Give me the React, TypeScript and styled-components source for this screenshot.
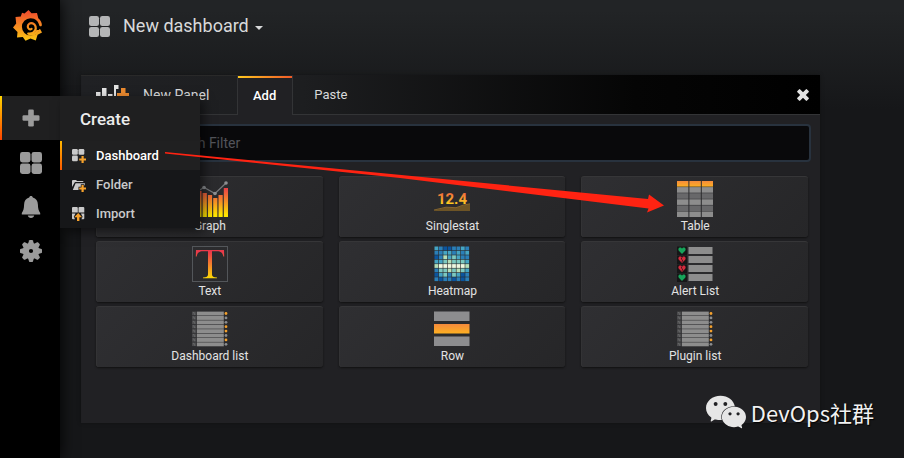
import React from "react";
import styled, { createGlobalStyle, css } from "styled-components";
import { SiWechat } from "react-icons/si";

const GlobalStyle = createGlobalStyle`
  * { box-sizing: border-box; }
  body {
    margin: 0;
    background: #161719;
    color: #d8d9da;
    font-family: Roboto, "Noto Sans", sans-serif;
    font-size: 13px;
    line-height: 16px;
  }
  button, input { font: inherit; color: inherit; }
  a { color: inherit; text-decoration: none; }
  svg { display: block; flex: none; }
`;

const Page = styled.div`
  position: relative;
  display: flex;
  min-height: 100vh;
  background: linear-gradient(180deg, #222426 10px, #161719 110px);
`;

const Sidebar = styled.nav`
  position: relative;
  z-index: 2;
  flex: none;
  display: flex;
  flex-direction: column;
  width: 60px;
  background: #000;
  box-shadow: 0 0 15px #000;
`;

const LogoLink = styled.a`
  display: flex;
  justify-content: center;
  height: 96px;
  padding-top: 10px;
  padding-right: 4px;
`;

const SideList = styled.ul`
  list-style: none;
  margin: 0;
  padding: 0;
`;

const SideItem = styled.li<{ $open?: boolean }>`
  position: relative;
  ${(p) =>
    p.$open &&
    css`
      margin-bottom: 1px;
      background: #1f1f20;
      &::before {
        content: "";
        position: absolute;
        inset: 0 auto 0 0;
        width: 2px;
        background: linear-gradient(180deg, #ffd500, #ff4400);
      }
    `}
`;

const SideLink = styled.a`
  display: flex;
  align-items: center;
  justify-content: center;
  height: 44px;
  padding-left: 2px;
  color: #9b9b9b;
`;

const Flyout = styled.div`
  position: absolute;
  top: 0;
  left: 100%;
  width: 140px;
  background: #161719;
  box-shadow: 4px 4px 10px rgba(0, 0, 0, 0.5);
`;

const FlyoutTitle = styled.a`
  display: flex;
  align-items: center;
  height: 45px;
  padding-left: 20px;
  background: #1f1f20;
  color: #ececec;
  font-size: 17px;
  font-weight: 500;
`;

const FlyoutLink = styled.a<{ $active?: boolean }>`
  position: relative;
  display: flex;
  align-items: center;
  gap: 10px;
  height: 29px;
  padding-left: 12px;
  font-weight: 500;
  color: ${(p) => (p.$active ? "#ffffff" : "#c9cacb")};
  background: ${(p) => (p.$active ? "#202021" : "transparent")};
  ${(p) =>
    p.$active &&
    css`
      &::before {
        content: "";
        position: absolute;
        inset: 0 auto 0 0;
        width: 2px;
        background: linear-gradient(180deg, #ffb800, #ff5a00);
      }
    `}
`;

const Main = styled.main`
  flex: 1;
  min-width: 0;
  display: flex;
  flex-direction: column;
`;

const Navbar = styled.header`
  display: flex;
  align-items: center;
  height: 52px;
  padding-left: 29px;
`;

const TitleButton = styled.button`
  display: flex;
  align-items: center;
  gap: 13px;
  padding: 0;
  border: 0;
  background: none;
  color: #d8d9da;
  font-size: 18px;
  line-height: 24px;
  > svg { color: #b4b5b6; }
`;

const TitleText = styled.span`
  display: flex;
  align-items: center;
  gap: 6px;
`;

const Caret = styled.span`
  margin-top: 4px;
  border: 4px solid transparent;
  border-top-color: currentColor;
  border-bottom: 0;
`;

const Panel = styled.section`
  display: flex;
  flex-direction: column;
  margin: 23px 84px 35px 21px;
  background: #212124;
  box-shadow: 0 0 4px rgba(0, 0, 0, 0.3);
`;

const PanelHead = styled.div`
  display: flex;
  height: 40px;
  background: linear-gradient(90deg, #202124, #1d1e20 30%, #050505 75%, #000);
`;

const cell = css`
  display: flex;
  align-items: center;
  border-top: 1px solid #292929;
  border-bottom: 1px solid #333436;
`;

const PanelTitle = styled.h2`
  ${cell}
  gap: 14px;
  width: 156px;
  margin: 0;
  padding-left: 15px;
  font-size: 14px;
  font-weight: 400;
`;

const TabButton = styled.button<{ $active?: boolean }>`
  ${cell}
  position: relative;
  justify-content: center;
  padding: 0 16px 0 21px;
  border-width: 1px 0;
  border-top-color: transparent;
  background: none;
  ${(p) =>
    p.$active &&
    css`
      border-width: 1px 1px 0;
      border-left: 1px solid #333436;
      border-right: 1px solid #333436;
      padding: 0 16px 0 15px;
      background: #212124;
      color: #fff;
      font-weight: 500;
      &::before {
        content: "";
        position: absolute;
        inset: 0 0 auto 0;
        height: 2px;
        background: linear-gradient(90deg, #ffc81f, #f05a28);
      }
    `}
`;

const HeadEnd = styled.div`
  ${cell}
  flex: 1;
  justify-content: flex-end;
  padding-right: 11px;
  border-top-color: transparent;
`;

const CloseButton = styled.button`
  padding: 0;
  border: 0;
  background: none;
  color: #e3e3e3;
`;

const PanelBody = styled.div`
  display: flex;
  flex-direction: column;
  padding: 9px 9px 56px 15px;
`;

const SearchInput = styled.input`
  width: 100%;
  height: 38px;
  padding: 0 26px 1px;
  border: 2px solid #28323e;
  border-radius: 4px;
  background: #09090b;
  font-size: 14px;
  outline: 0;
  &::placeholder { color: #52545a; opacity: 1; }
`;

const CardGrid = styled.div`
  display: grid;
  grid-template-columns: repeat(3, 1fr);
  gap: 4px 16px;
  margin-top: 14px;
  padding-right: 3px;
`;

const Card = styled.button`
  display: flex;
  flex-direction: column;
  align-items: center;
  height: 61px;
  padding: 4px 0 0 1px;
  border: 0;
  border-top: 1px solid #363638;
  border-radius: 3px;
  background: linear-gradient(135deg, #2f2f32, #262628);
  box-shadow: 0 1px 2px #111, inset 1px 0 0 #333335;
  color: #e3e3e3;
  font-size: 12px;
  line-height: 18px;
`;

const Arrow = styled.svg`
  position: absolute;
  z-index: 3;
  top: 0;
  left: 0;
  pointer-events: none;
`;

const Watermark = styled.div`
  position: absolute;
  right: 30px;
  bottom: 26px;
  display: flex;
  align-items: center;
  gap: 5px;
  color: #f2f2f2;
  font-family: "Noto Sans CJK SC", sans-serif;
  font-size: 22px;
  line-height: 34px;
  text-shadow: 1px 1px 1px #000;
  > svg { color: #e6e6e6; }
`;

const HiddenDefs = styled.svg`
  position: absolute;
`;

const Gradients = () => (
  <HiddenDefs width="0" height="0" aria-hidden="true">
    <defs>
      <linearGradient id="flame" gradientUnits="userSpaceOnUse" x1="0" y1="2" x2="0" y2="30">
        <stop offset="0" stopColor="#f0502e" />
        <stop offset="1" stopColor="#fcc414" />
      </linearGradient>
      <linearGradient id="fire" gradientUnits="userSpaceOnUse" x1="0" y1="6" x2="0" y2="34">
        <stop offset="0" stopColor="#e8394a" />
        <stop offset="0.45" stopColor="#f4822c" />
        <stop offset="1" stopColor="#ffe600" />
      </linearGradient>
      <linearGradient id="amber" x1="0" y1="0" x2="0" y2="1">
        <stop offset="0" stopColor="#f58a3c" />
        <stop offset="1" stopColor="#fdb022" />
      </linearGradient>
      <linearGradient id="digits" x1="0" y1="0" x2="0" y2="1">
        <stop offset="0.2" stopColor="#f0703c" />
        <stop offset="0.8" stopColor="#ffd21e" />
      </linearGradient>
    </defs>
  </HiddenDefs>
);

const LogoIcon = () => (
  <svg width="30" height="32" viewBox="0 0 30 32">
    <path
      d="M11.500 3.500L15.500 0 18.500 3.200 24 3 25.300 8.200Q28.800 11 28.900 15.200L26.800 18.500 29 22.500 24.600 24.800 22.800 30.600 17.500 28.600 12.500 30.800 9.800 27 4 27.500 4.500 22 0 17.500 3.200 13.500 2.500 7 7.800 6.500 9 2.800z"
      fill="url(#flame)"
    />
    <path d="M17.500 8.200C22.500 8.200 25.600 11.500 26.500 16L30 17 26 19.500C25 24 21.500 25.600 17.500 25.400A8.600 8.600 0 0 1 17.500 8.200z" fill="#000" />
    <path
      d="M18.600 18.800C16.800 20 14.600 18.600 14.800 16.300 15 13.800 17.300 12.600 19.700 13.400 22.600 14.400 23.600 17.800 22 20.600 20.700 23 18 24 15.200 23.600"
      fill="none"
      stroke="url(#flame)"
      strokeWidth="2.200"
      strokeLinecap="round"
    />
    <path d="M26.400 20Q25.500 24 20 25.800L15 25.600 16 23.400Q20.500 24.500 23.500 20z" fill="url(#flame)" />
  </svg>
);

const GridIcon = ({ size }: { size: number }) => (
  <svg width={size} height={size} viewBox="0 0 22 22" fill="currentColor">
    {[0, 11.5].map((x) =>
      [0, 11.5].map((y) => <rect key={`${x}-${y}`} x={x} y={y} width="10.5" height="10.5" rx="2.4" />)
    )}
  </svg>
);

const PlusIcon = () => (
  <svg width="18" height="18" viewBox="0 0 18 18" fill="currentColor">
    <rect x="6.2" y="0.5" width="5.6" height="17" rx="1.3" />
    <rect x="0.5" y="6.2" width="17" height="5.6" rx="1.3" />
  </svg>
);

const BellIcon = () => (
  <svg width="20" height="22" viewBox="0 0 20 22" fill="currentColor">
    <path d="M10 0c1.1 0 1.7.7 1.8 1.6 3.3.8 5 3.4 5.1 6.9.1 4.200.7 6.300 2.300 8.500v1.600H.8V17c1.600-2.200 2.200-4.300 2.300-8.500.1-3.500 1.800-6.100 5.100-6.900C8.300.7 8.900 0 10 0z" />
    <path d="M6.800 19.600h6.400c-.3 1.500-1.500 2.300-3.200 2.300s-2.900-.8-3.200-2.300z" />
  </svg>
);

const GearIcon = () => (
  <svg width="22" height="22" viewBox="-11 -11 22 22" fill="currentColor">
    {[0, 45, 90, 135, 180, 225, 270, 315].map((a) => (
      <path key={a} transform={`rotate(${a})`} d="M-3.200-6.500L-1.900-10.500Q-1.700-11-1.200-11H1.200Q1.700-11 1.900-10.500L3.200-6.500z" />
    ))}
    <path fillRule="evenodd" d="M0-8A8 8 0 1 1 0 8A8 8 0 1 1 0-8zM0-2.100A2.100 2.100 0 1 0 0 2.100A2.100 2.100 0 1 0 0-2.100z" />
  </svg>
);

const CloseIcon = () => (
  <svg width="12" height="12" viewBox="-6 -6 12 12" fill="currentColor">
    <g transform="rotate(45)">
      <rect x="-6.800" y="-2" width="13.600" height="4" rx="0.900" />
      <rect x="-2" y="-6.800" width="4" height="13.600" rx="0.900" />
    </g>
  </svg>
);

const SmallPlus = () => <path d="M9.500 7h2.200v2.400H14v2.200h-2.300V14H9.500v-2.400H7.200V9.400h2.300z" fill="#f5a12c" />;

const MiniDashboard = () => (
  <svg width="14" height="14" viewBox="0 0 14 14" fill="#c9c9c9">
    <rect width="5.800" height="5.800" rx="1.200" />
    <rect x="6.500" width="5.800" height="5.800" rx="1.200" />
    <rect y="6.500" width="5.800" height="5.800" rx="1.200" />
    <SmallPlus />
  </svg>
);

const MiniFolder = () => (
  <svg width="14" height="14" viewBox="0 0 14 14" fill="#c9c9c9">
    <path d="M0 9V3q0-1 1-1h3l1 1h5.500q1 0 1 1H3.500q-.8 0-1 .8z" />
    <path d="M3.600 5.200H13l-.6 2.800-.4-1.700H8.800v2.400H6.500V12H.8z" />
    <SmallPlus />
  </svg>
);

const MiniImport = () => (
  <svg width="14" height="14" viewBox="0 0 14 14" fill="#c9c9c9">
    <path d="M1 0h3.800q1 0 1 1v4.600H0V1q0-1 1-1zM7.500 0h3.800q1 0 1 1v4.600H6.500V1q0-1 1-1zM0 6.400h3.500L1.800 9.800 3 12.300H1q-1 0-1-1zM12.300 6.400H8.900l1.700 3.400-1.200 2.500h1.900q1 0 1-1z" />
    <path d="M6.200 6l3.900 4.300H7.400V14H5v-3.700H2.300z" fill="#f5a12c" />
  </svg>
);

const AddPanelIcon = () => (
  <svg width="33" height="20" viewBox="0 0 33 20" fill="#e3e3e3">
    <rect y="7" width="4.500" height="13" />
    <rect x="6" y="3" width="4.500" height="17" />
    <rect x="12" y="9" width="4.500" height="11" />
    <path d="M18 0h4.500v4H20v7h-2z" />
    <path d="M25 3h4.500v5H33v5h-3.500v5H25v-5h-4V8h4z" fill="#eb8a2f" />
  </svg>
);

const GraphIcon = () => (
  <svg width="36" height="36" viewBox="0 0 36 36">
    <g fill="url(#fire)">
      {[16, 10, 12, 14, 17, 14, 7].map((y, i) => (
        <rect key={i} x={i * 5.300} y={y} width="4.200" height={36 - y} />
      ))}
    </g>
    <path d="M1 13L12 6.500 23 12.500 34 2" fill="none" stroke="#77797c" strokeWidth="1.200" />
    <g fill="#8d8f92">
      <circle cx="1.800" cy="13" r="1.800" />
      <circle cx="12" cy="6.500" r="1.800" />
      <circle cx="23" cy="12.500" r="1.800" />
      <circle cx="34" cy="2" r="1.800" />
    </g>
  </svg>
);

const StatIcon = () => (
  <svg width="36" height="36" viewBox="0 0 36 36">
    <path d="M0 29.500L12 26.500 22 27 29 24.500 36 23v7H0z" fill="#6d5426" />
    <path d="M0 29L12 26.200 22 26.700 29 24.200 36 22.800" fill="none" stroke="#9a7430" strokeWidth="0.800" />
    <text x="18" y="23" textAnchor="middle" fontFamily="Roboto" fontWeight="700" fontSize="15" fill="url(#digits)">
      12.4
    </text>
  </svg>
);

const TableIcon = () => (
  <svg width="36" height="36" viewBox="0 0 36 36">
    {["url(#amber)", "#8d8d8d", "#68686a", "#8d8d8d", "#68686a", "#8d8d8d"].map((fill, r) =>
      [0, 12.400, 24.800].map((x) => <rect key={`${r}-${x}`} x={x} y={r * 6.100} width="11.400" height="5.600" fill={fill} />)
    )}
  </svg>
);

const TextIcon = () => (
  <svg width="36" height="36" viewBox="0 0 36 36">
    <rect x="0.500" y="0.500" width="35" height="35" fill="none" stroke="#53565a" />
    <path d="M4 4H32L32.200 10.500H31.300C30.800 6.800 29 5.200 25 5.200H20V28.500C20 30.700 21.500 31.200 25 31.400V32.200H11V31.400C14.500 31.200 16 30.700 16 28.500V5.200H11C7 5.200 5.200 6.800 4.700 10.500H3.800z" fill="url(#fire)" />
  </svg>
);

const heat = ["#0b559f", "#2a7fb8", "#45a5c4", "#7cc9c0", "#b5dfb8", "#eef8e0"];
const heatRows = ["21001121", "11221212", "01423211", "22343332", "45555554", "13343432", "02313201", "10110101"];

const HeatmapIcon = () => (
  <svg width="36" height="36" viewBox="0 0 36 36">
    {heatRows.map((row, r) =>
      row.split("").map((v, c) => (
        <rect key={`${r}-${c}`} x={c * 4.400 + 0.500} y={r * 4.400 + 0.500} width="3.800" height="3.800" fill={heat[Number(v)]} />
      ))
    )}
  </svg>
);

const AlertIcon = () => (
  <svg width="36" height="36" viewBox="0 0 36 36">
    {["#17a45a", "#d42a3c", "#d42a3c", "#17a45a"].map((fill, r) => (
      <g key={r} transform={`translate(0 ${r * 9})`}>
        <rect width="10" height="8.500" y="0.500" fill="#161617" />
        <path d="M5 8L1.800 4.800C.8 3.500 1.500 1.500 3 1.500 4 1.500 4.700 2 5 2.800 5.300 2 6 1.500 7 1.500 8.500 1.500 9.200 3.500 8.200 4.800z" fill={fill} />
        {fill === "#d42a3c" && <path d="M5 2.500l-.8 1.500 1.400 1L5 7" fill="none" stroke="#161617" strokeWidth="0.700" />}
        <rect x="11.500" y="1" width="24" height="7" fill="#8d8d8d" />
      </g>
    ))}
  </svg>
);

const ListIcon = () => (
  <svg width="36" height="36" viewBox="0 0 36 36">
    {["#f5a12c", "#8b8d90", "#8b8d90", "#f5a12c", "#f5a12c", "#8b8d90", "#f5a12c", "#8b8d90"].map((fill, r) => (
      <g key={r} transform={`translate(0 ${r * 4.400 + 0.600})`}>
        <rect width="4" height="3.700" fill="#4b4b4d" />
        <path d="M1 1h1.200v1.800H3.300" fill="none" stroke="#77787a" strokeWidth="0.600" />
        <rect x="4.800" width="27" height="3.900" fill="#8d8d8d" />
        <circle cx="34" cy="1.900" r="1.400" fill={fill} />
      </g>
    ))}
  </svg>
);

const RowIcon = () => (
  <svg width="36" height="36" viewBox="0 0 36 36">
    <rect y="0.500" width="35.500" height="9.500" fill="#8d8d8f" />
    <rect y="13" width="35.500" height="9.500" fill="url(#amber)" />
    <rect y="25.500" width="35.500" height="9.500" fill="#8d8d8f" />
  </svg>
);

const panels = [
  { label: "Graph", Icon: GraphIcon },
  { label: "Singlestat", Icon: StatIcon },
  { label: "Table", Icon: TableIcon },
  { label: "Text", Icon: TextIcon },
  { label: "Heatmap", Icon: HeatmapIcon },
  { label: "Alert List", Icon: AlertIcon },
  { label: "Dashboard list", Icon: ListIcon },
  { label: "Row", Icon: RowIcon },
  { label: "Plugin list", Icon: ListIcon },
];

export default function App() {
  return (
    <Page>
      <GlobalStyle />
      <Gradients />
      <Sidebar>
        <LogoLink href="#home" aria-label="Home">
          <LogoIcon />
        </LogoLink>
        <SideList>
          <SideItem $open>
            <SideLink href="#create" aria-label="Create">
              <PlusIcon />
            </SideLink>
            <Flyout>
              <FlyoutTitle href="#create">Create</FlyoutTitle>
              <FlyoutLink href="#dashboard" $active>
                <MiniDashboard />
                Dashboard
              </FlyoutLink>
              <FlyoutLink href="#folder">
                <MiniFolder />
                Folder
              </FlyoutLink>
              <FlyoutLink href="#import">
                <MiniImport />
                Import
              </FlyoutLink>
            </Flyout>
          </SideItem>
          <SideItem>
            <SideLink href="#dashboards" aria-label="Dashboards">
              <GridIcon size={22} />
            </SideLink>
          </SideItem>
          <SideItem>
            <SideLink href="#alerting" aria-label="Alerting">
              <BellIcon />
            </SideLink>
          </SideItem>
          <SideItem>
            <SideLink href="#configuration" aria-label="Configuration">
              <GearIcon />
            </SideLink>
          </SideItem>
        </SideList>
      </Sidebar>
      <Main>
        <Navbar>
          <TitleButton>
            <GridIcon size={21} />
            <TitleText>
              New dashboard
              <Caret />
            </TitleText>
          </TitleButton>
        </Navbar>
        <Panel>
          <PanelHead>
            <PanelTitle>
              <AddPanelIcon />
              New Panel
            </PanelTitle>
            <TabButton $active>Add</TabButton>
            <TabButton>Paste</TabButton>
            <HeadEnd>
              <CloseButton aria-label="Close">
                <CloseIcon />
              </CloseButton>
            </HeadEnd>
          </PanelHead>
          <PanelBody>
            <SearchInput type="text" placeholder="Panel Search Filter" aria-label="Panel Search Filter" />
            <CardGrid>
              {panels.map(({ label, Icon }) => (
                <Card key={label}>
                  <Icon />
                  {label}
                </Card>
              ))}
            </CardGrid>
          </PanelBody>
        </Panel>
      </Main>
      <Arrow width="670" height="220" viewBox="0 0 670 220" aria-hidden="true">
        <path d="M165 152L648 199 649 194.500 664 205.500 647 212.500 648.500 208.500 400 178 165 153.500z" fill="#ff2312" />
      </Arrow>
      <Watermark>
        <SiWechat size={40} />
        DevOps社群
      </Watermark>
    </Page>
  );
}
